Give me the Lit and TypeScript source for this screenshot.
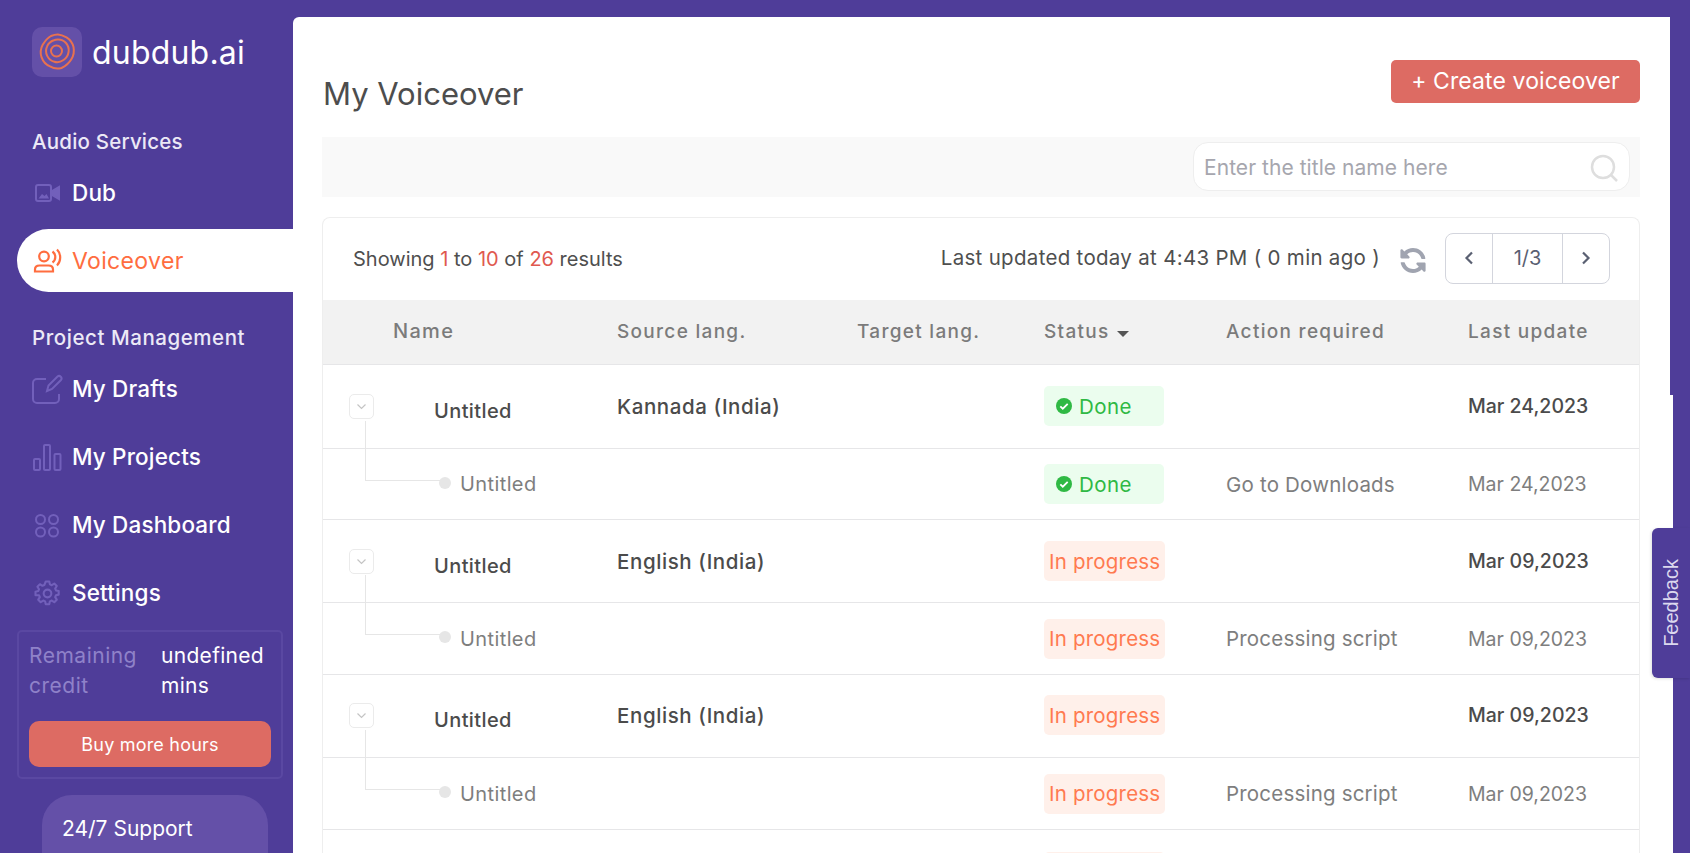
import { LitElement, html, css, svg } from 'lit';
import { customElement } from 'lit/decorators.js';

type Row = {
  kind: 'parent' | 'child';
  name: string;
  source?: string;
  status: 'done' | 'progress';
  action?: string;
  date: string;
};

const ROWS: Row[] = [
  { kind: 'parent', name: 'Untitled', source: 'Kannada (India)', status: 'done', date: 'Mar 24,2023' },
  { kind: 'child', name: 'Untitled', status: 'done', action: 'Go to Downloads', date: 'Mar 24,2023' },
  { kind: 'parent', name: 'Untitled', source: 'English (India)', status: 'progress', date: 'Mar 09,2023' },
  { kind: 'child', name: 'Untitled', status: 'progress', action: 'Processing script', date: 'Mar 09,2023' },
  { kind: 'parent', name: 'Untitled', source: 'English (India)', status: 'progress', date: 'Mar 09,2023' },
  { kind: 'child', name: 'Untitled', status: 'progress', action: 'Processing script', date: 'Mar 09,2023' }
];

const ICONS = {
  dub: svg`<rect x="4" y="8" width="15" height="16" rx="2"/><path d="M20 14l7-4v12l-7-4z" fill="currentColor"/><path d="M6.500 21.500l3.500-4.500 2.500 2 2-2 2.500 4.500z" fill="currentColor" stroke="none"/>`,
  drafts: svg`<path d="M14 6H5a4 4 0 0 0-4 4v16a4 4 0 0 0 4 4h18a4 4 0 0 0 4-4v-5"/><path d="M15 18l1.500-5.500L25.500 3.500a2.500 2.500 0 0 1 3.500 3.500l-9 9z"/>`,
  projects: svg`<rect x="2" y="18" width="6" height="11" rx="1"/><rect x="12" y="4" width="6" height="25" rx="1"/><rect x="22.500" y="13" width="6" height="16" rx="1"/>`,
  dashboard: svg`<circle cx="8.500" cy="10.500" r="4.500"/><circle cx="21.500" cy="10.500" r="4.500"/><circle cx="8.500" cy="23" r="4.500"/><circle cx="21.500" cy="23" r="4.500"/>`,
  settings: svg`<g transform="translate(15.500 16.500) scale(.8) translate(-15 -15)" stroke-width="2.600"><circle cx="15" cy="15" r="4.800"/><path d="M12.800 0h4.400l.8 3.600 2.300 1 3.200-2 3.100 3.100-2 3.200 1 2.300 3.400.8v4.400l-3.400.8-1 2.300 2 3.200-3.100 3.100-3.200-2-2.300 1-.8 3.600h-4.400l-.8-3.600-2.300-1-3.200 2-3.100-3.100 2-3.200-1-2.300L0 17.200v-4.400l3.400-.8 1-2.300-2-3.200 3.100-3.100 3.200 2 2.300-1z" stroke-linejoin="round"/></g>`
};

@customElement('app-root')
export class AppRoot extends LitElement {
  static styles = css`
    :host {
      display: block;
      height: 853px;
      overflow: hidden;
      position: relative;
      background: #4f3d99;
      font-family: Inter, 'Noto Sans', sans-serif;
      color: #4a4a4a;
    }
    * {
      box-sizing: border-box;
    }
    .page {
      display: flex;
      height: 853px;
    }

    /* sidebar */
    .sidebar {
      width: 293px;
      flex: none;
      display: flex;
      flex-direction: column;
      color: #fff;
    }
    .sidebar > * {
      flex: none;
    }
    .logo {
      display: flex;
      align-items: center;
      gap: 10px;
      margin: 27px 0 0 32px;
      height: 50px;
    }
    .logo-box {
      width: 50px;
      height: 50px;
      border-radius: 10px;
      background: #6450a8;
      display: flex;
      align-items: center;
      justify-content: center;
    }
    .logo-text {
      font-size: 32px;
      letter-spacing: 0.2px;
    }
    .heading {
      height: 30px;
      line-height: 30px;
      margin-left: 32px;
      font-size: 20.500px;
      font-weight: 500;
      letter-spacing: 0.2px;
      color: #ece9f6;
    }
    .heading.first {
      margin-top: 50px;
    }
    .heading.second {
      margin-top: 31px;
      margin-bottom: 2px;
      letter-spacing: 0.55px;
    }
    .nav {
      display: flex;
      align-items: center;
      height: 68px;
      padding: 0 0 2px 32px;
      font-size: 22.500px;
      font-weight: 500;
      letter-spacing: 0.15px;
    }
    .nav.dub {
      height: 71px;
      margin-bottom: 1px;
      padding-bottom: 0;
    }
    .nav-icon {
      width: 40px;
      flex: none;
      display: flex;
      margin-top: 2px;
      color: #7260bb;
    }
    .nav.dub .nav-icon {
      margin-top: 0;
    }
    .nav.active {
      height: 63px;
      margin-left: 17px;
      padding: 0 0 0 15px;
      background: #fff;
      border-radius: 32px 0 0 32px;
      color: #ff6d3f;
      font-weight: 400;
      font-size: 23px;
      letter-spacing: 0.35px;
    }
    .nav.active .nav-icon {
      margin-top: 0;
      color: #ff6d3f;
    }
    .credit {
      margin: 3px 0 0 17px;
      width: 266px;
      height: 149px;
      padding: 9px 10px 0;
      border: 2px solid #5a48a2;
      border-radius: 5px;
    }
    .credit-grid {
      display: grid;
      grid-template-columns: 132px 1fr;
      font-size: 21px;
      line-height: 30px;
      letter-spacing: 0.3px;
    }
    .credit-label {
      color: #8f82c9;
      letter-spacing: 0.5px;
    }
    .buy {
      margin-top: 20px;
      height: 46px;
      border-radius: 10px;
      background: #dd6b63;
      color: #fff;
      display: flex;
      align-items: center;
      justify-content: center;
      font-size: 18px;
      letter-spacing: 0.2px;
    }
    .support {
      margin: 16px 0 0 42px;
      width: 226px;
      height: 120px;
      padding: 21px 20px;
      border-radius: 30px 30px 0 0;
      background: #6450a8;
      font-size: 21px;
    }

    /* main panel */
    .main {
      width: 1380px;
      flex: none;
      margin-top: 17px;
      padding: 0 33px 0 29px;
      background: #fff;
      border-radius: 6px 0 0 0;
    }
    .top {
      display: flex;
      justify-content: space-between;
      align-items: flex-start;
      height: 120px;
    }
    .title {
      margin: 58px 0 0 1px;
      font-size: 31px;
      font-weight: 400;
      line-height: 38px;
      color: #4d4d4d;
    }
    .create {
      margin-top: 43px;
      width: 249px;
      height: 43px;
      padding-bottom: 2px;
      border-radius: 5px;
      background: #dd6b63;
      color: #fff;
      font-size: 23px;
      letter-spacing: 0.1px;
      display: flex;
      align-items: center;
      justify-content: center;
    }
    .filter {
      height: 60px;
      padding: 5px 10px 6px;
      background: #f9f9f9;
      display: flex;
      justify-content: flex-end;
    }
    .search {
      width: 437px;
      height: 49px;
      background: #fff;
      border: 1px solid #eeeeee;
      border-radius: 15px;
      display: flex;
      align-items: center;
      padding: 2px 11px 0 10px;
    }
    .search input {
      flex: 1;
      min-width: 0;
      border: 0;
      outline: 0;
      padding: 0;
      background: none;
      font: inherit;
      font-size: 21px;
      letter-spacing: 0.05px;
    }
    .search input::placeholder {
      color: #a6a6ae;
      opacity: 1;
    }
    .card {
      margin-top: 20px;
      border: 1px solid #eeeeee;
      border-bottom: 0;
      border-radius: 8px 8px 0 0;
    }
    .bar {
      height: 82px;
      display: flex;
      align-items: center;
      padding: 0 29px 0 30px;
      font-size: 20px;
      color: #4f4f4f;
    }
    .bar b {
      font-weight: 400;
      color: #e0594f;
    }
    .updated {
      margin: 0 0 3px auto;
      display: flex;
      align-items: center;
      font-size: 20.500px;
      letter-spacing: 0.3px;
    }
    .refresh {
      margin: 6px 19px 0 20px;
      display: flex;
    }
    .pager {
      width: 165px;
      height: 51px;
      margin-bottom: 2px;
      border: 1.500px solid #d3d5dd;
      border-radius: 8px;
      display: grid;
      grid-template-columns: 46px 71px 1fr;
      align-items: stretch;
    }
    .pager > div {
      display: flex;
      align-items: center;
      justify-content: center;
      color: #5a6072;
    }
    .pager > div:nth-child(2) {
      border-left: 1.500px solid #d3d5dd;
      border-right: 1.500px solid #d3d5dd;
    }
    .row {
      display: grid;
      grid-template-columns: 294px 240px 187px 182px 242px 1fr;
      align-items: center;
      border-bottom: 1px solid #e6e6e8;
      height: 83px;
      font-size: 19.500px;
    }
    .row.head {
      height: 65px;
      padding-bottom: 2px;
      background: #f2f2f2;
      font-size: 19px;
      font-weight: 500;
      letter-spacing: 1.300px;
      color: #7b7b7b;
    }
    .row.head .name {
      padding-left: 70px;
      letter-spacing: inherit;
    }
    .caret {
      display: inline-block;
      margin-left: 7px;
      vertical-align: 1px;
      border: 6px solid transparent;
      border-top-color: #555;
      border-bottom: 0;
    }
    .row.parent {
      font-weight: 500;
      color: #4b4b4b;
    }
    .row.parent:nth-child(6) {
      padding-bottom: 2px;
    }
    .row.parent:nth-child(2) {
      height: 84px;
      padding-bottom: 1px;
    }
    .row.child {
      height: 72px;
      color: #7e7e7e;
    }
    .row.child:nth-child(3) {
      height: 71px;
    }
    .source {
      font-size: 20.500px;
      letter-spacing: 0.6px;
    }
    .name {
      position: relative;
      display: flex;
      align-items: center;
      height: 100%;
      font-size: 20px;
      letter-spacing: 0.4px;
    }
    .action {
      font-size: 20.500px;
      font-weight: 400;
      color: #7e7e7e;
      letter-spacing: 0.2px;
    }
    .toggle {
      width: 25px;
      height: 25px;
      margin: 0 0 0 26px;
      flex: none;
      border: 1px solid #ebebeb;
      border-radius: 5px;
      display: flex;
      align-items: center;
      justify-content: center;
    }
    .parent .name span {
      margin: 9px 0 0 60px;
    }
    .child .name {
      padding-left: 116px;
    }
    .connector {
      position: absolute;
      left: 42px;
      top: -28px;
      width: 76px;
      height: 60px;
      border-left: 1px solid #e6e6e6;
      border-bottom: 1px solid #e6e6e6;
    }
    .dot {
      width: 12px;
      height: 12px;
      margin: 0 9px 3px 0;
      border-radius: 50%;
      background: #e6e6e6;
      position: relative;
    }
    .badge {
      width: 120px;
      height: 40px;
      border-radius: 5px;
      display: flex;
      align-items: center;
      gap: 7px;
      white-space: nowrap;
      font-weight: 400;
      font-size: 20.500px;
    }
    .badge.done {
      padding-left: 12px;
      background: #ebfdee;
      color: #2fb944;
      letter-spacing: 0.4px;
    }
    .badge.progress {
      width: 121px;
      padding-left: 5px;
      background: #fff0ea;
      color: #ff7a50;
      letter-spacing: 0.2px;
    }
    /* next group's badge only peeks in at the bottom edge */
    .peek {
      height: 23px;
      padding-top: 22px;
      border: 0;
      align-items: start;
    }
    .feedback {
      position: absolute;
      left: 1652px;
      top: 528px;
      width: 38px;
      height: 150px;
      background: #4f3d99;
      border-radius: 6px 0 0 6px;
      box-shadow: -1px 1px 3px rgba(0, 0, 0, 0.12);
      display: flex;
      align-items: center;
      justify-content: center;
    }
    .feedback span {
      writing-mode: vertical-rl;
      transform: rotate(180deg);
      font-family: 'Liberation Sans', Arial, sans-serif;
      font-size: 20px;
      color: #dcd8ee;
    }
    .notch {
      position: absolute;
      left: 1670px;
      top: 17px;
      width: 3px;
      height: 378px;
      background: #4f3d99;
    }
  `;

  navIcon(paths: unknown) {
    return html`<span class="nav-icon"
      ><svg width="32" height="32" viewBox="0 0 32 32" fill="none" stroke="currentColor" stroke-width="2">
        ${paths}
      </svg></span
    >`;
  }

  renderRow(r: Row) {
    return html`<div class="row ${r.kind}">
      <div class="name">
        ${r.kind === 'parent'
          ? html`<div class="toggle">
                <svg width="11" height="7" viewBox="0 0 11 7" fill="none" stroke="#c4c4c4" stroke-width="1.200">
                  <path d="M1.500 1.500l4 4 4-4" />
                </svg>
              </div>
              <span>${r.name}</span>`
          : html`<div class="connector"></div>
              <div class="dot"></div>
              ${r.name}`}
      </div>
      <div class="source">${r.source ?? ''}</div>
      <div></div>
      <div>
        ${r.status === 'done'
          ? html`<div class="badge done">
              <svg width="16" height="16" viewBox="0 0 16 16">
                <circle cx="8" cy="8" r="8" fill="#2fb944" />
                <path d="M4.300 8.300l2.500 2.400 4.900-4.900" fill="none" stroke="#fff" stroke-width="1.800" />
              </svg>
              Done
            </div>`
          : html`<div class="badge progress">In progress</div>`}
      </div>
      <div class="action">${r.action ?? ''}</div>
      <div>${r.date}</div>
    </div>`;
  }

  render() {
    return html`
      <div class="page">
        <aside class="sidebar">
          <div class="logo">
            <div class="logo-box">
              <svg width="40" height="40" viewBox="0 0 40 40" fill="none" stroke="#e8714f" stroke-width="2">
                <path d="M21 2.500c3.500.3 6 1.500 8.500 2.800 3.500 2.200 6 5.500 7 9.700.8 4.200.2 8.500-2 12-2.300 4-5.700 7-10 9-4.200 1.200-8 .6-11.500-1.600-4.200-1.600-7-5-8.500-9.200-1.400-4.300-1-8.500 1.200-12.500C8 9 10.500 6 14 4c2.200-.9 4.600-1.600 7-1.500z" />
                <path d="M20.500 7.500c3.500-.2 6.500 1.200 8.500 3.500 2.200 2.500 3 5.700 2.600 8.800-.5 3.500-2.100 6.200-5.100 8.200-2.700 2-6.100 2.800-9.100 1.800-3.100-.8-5.700-3-7.200-5.900-1.500-3-1.500-6.300-.2-9.300 1.200-3 3.900-5.300 6.900-6.300 1-.4 2.300-.7 3.600-.8z" />
                <circle cx="19.500" cy="19" r="5.500" />
              </svg>
            </div>
            <div class="logo-text">dubdub.ai</div>
          </div>
          <div class="heading first">Audio Services</div>
          <div class="nav dub">${this.navIcon(ICONS.dub)}Dub</div>
          <div class="nav active">
            <span class="nav-icon">
              <svg width="30" height="26" viewBox="0 0 30 26" fill="none" stroke="currentColor" stroke-width="2.200">
                <circle cx="12" cy="8.500" r="4.800" />
                <path d="M3 23.500v-2c0-2.500 2-4 4.500-4h9c2.500 0 4.500 1.500 4.500 4v2z" />
                <path d="M20.500 3.500c2 1.500 2.800 3.200 2.800 5.500s-.8 4-2.800 5.500M25 1.500c2.300 2.300 3.200 5 3.200 8s-.9 5.700-3.200 8" />
              </svg>
            </span>
            Voiceover
          </div>
          <div class="heading second">Project Management</div>
          <div class="nav">${this.navIcon(ICONS.drafts)}My Drafts</div>
          <div class="nav">${this.navIcon(ICONS.projects)}My Projects</div>
          <div class="nav">${this.navIcon(ICONS.dashboard)}My Dashboard</div>
          <div class="nav">${this.navIcon(ICONS.settings)}Settings</div>
          <div class="credit">
            <div class="credit-grid">
              <div class="credit-label">Remaining credit</div>
              <div>undefined mins</div>
            </div>
            <div class="buy">Buy more hours</div>
          </div>
          <div class="support">24/7 Support</div>
        </aside>
        <main class="main">
          <div class="top">
            <h1 class="title">My Voiceover</h1>
            <div class="create">+ Create voiceover</div>
          </div>
          <div class="filter">
            <div class="search">
              <input placeholder="Enter the title name here" />
              <svg width="28" height="28" viewBox="0 0 28 28" fill="none" stroke="#dedede" stroke-width="2.500">
                <circle cx="13" cy="13" r="11" />
                <path d="M21 21l6 6" />
              </svg>
            </div>
          </div>
          <div class="card">
            <div class="bar">
              <div>Showing <b>1</b> to <b>10</b> of <b>26</b> results</div>
              <div class="updated">
                Last updated today at 4:43 PM ( 0 min ago )
                <span class="refresh">
                  <svg width="26" height="27" viewBox="0 0 512 512" fill="#a0a4b0">
                    <g transform="translate(512 0) scale(-1 1)">
                      <path d="M370.720 133.280C339.458 104.008 298.888 87.962 255.848 88c-77.458.068-144.328 53.178-162.791 126.850-1.344 5.363-6.122 9.150-11.651 9.150H24.103c-7.498 0-13.194-6.807-11.807-14.176C33.933 94.924 134.813 8 256 8c66.448 0 126.791 26.136 171.315 68.685L463.030 40.970C478.149 25.851 504 36.559 504 57.941V192c0 13.255-10.745 24-24 24H345.941c-21.382 0-32.090-25.851-16.971-40.971l41.750-41.749zM32 296h134.059c21.382 0 32.090 25.851 16.971 40.971l-41.750 41.750c31.262 29.273 71.835 45.319 114.876 45.280 77.418-.070 144.315-53.144 162.787-126.849 1.344-5.363 6.122-9.150 11.651-9.150h57.304c7.498 0 13.194 6.807 11.807 14.176C478.067 417.076 377.187 504 256 504c-66.448 0-126.791-26.136-171.315-68.685L48.970 471.030C33.851 486.149 8 475.441 8 454.059V320c0-13.255 10.745-24 24-24z" />
                    </g>
                  </svg>
                </span>
              </div>
              <div class="pager">
                <div>
                  <svg width="10" height="14" viewBox="0 0 10 14" fill="none" stroke="currentColor" stroke-width="2.200">
                    <path d="M8 1.500L2.500 7 8 12.500" />
                  </svg>
                </div>
                <div>1/3</div>
                <div>
                  <svg width="10" height="14" viewBox="0 0 10 14" fill="none" stroke="currentColor" stroke-width="2.200">
                    <path d="M2 1.500L7.500 7 2 12.500" />
                  </svg>
                </div>
              </div>
            </div>
            <div class="rows">
              <div class="row head">
                <div class="name">Name</div>
                <div>Source lang.</div>
                <div>Target lang.</div>
                <div>Status<span class="caret"></span></div>
                <div>Action required</div>
                <div>Last update</div>
              </div>
              ${ROWS.map(r => this.renderRow(r))}
              <div class="row peek">
                <div></div>
                <div></div>
                <div></div>
                <div class="badge progress"></div>
              </div>
            </div>
          </div>
        </main>
      </div>
      <div class="notch"></div>
      <div class="feedback"><span>Feedback</span></div>
    `;
  }
}
